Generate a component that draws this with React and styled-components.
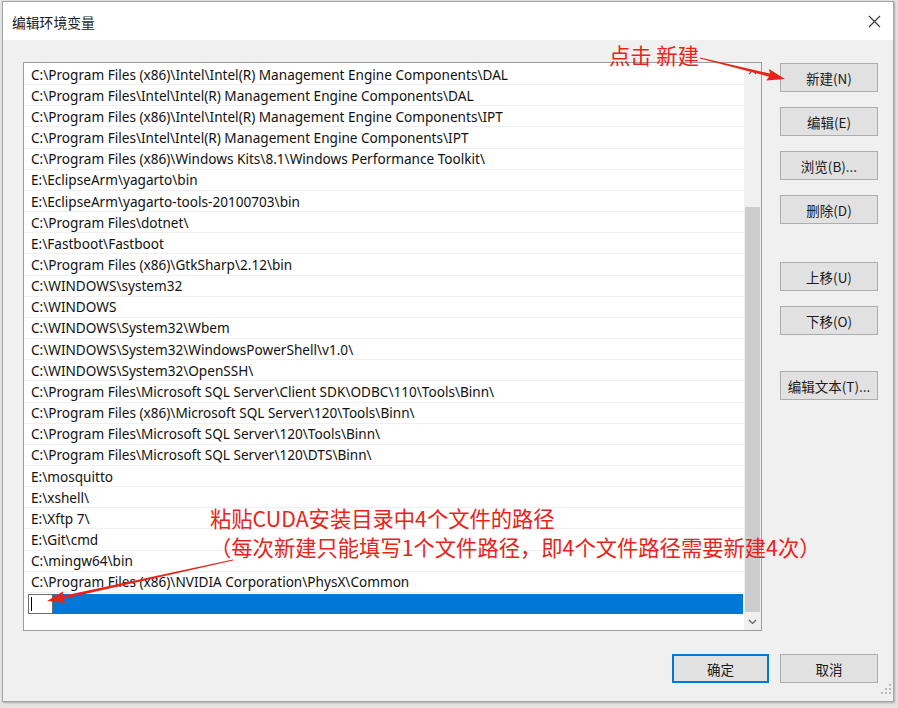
import React from "react";
import styled, { createGlobalStyle } from "styled-components";

const GlobalStyle = createGlobalStyle`
    html, body {
        margin: 0;
        padding: 0;
        background: #e4e4e4;
    }
    body {
        font-family: "Noto Sans", "Noto Sans CJK SC", sans-serif;
    }
`;

const Page = styled.div`
    position: relative;
    width: 898px;
    height: 708px;
    overflow: hidden;
    padding: 1px 0 0 2px;
    box-sizing: border-box;
`;

const Window = styled.div`
    width: 892px;
    height: 701px;
    box-sizing: border-box;
    border: 1px solid #a4a4a4;
    box-shadow: 1px 1px 2px rgba(0, 0, 0, 0.25);
    background: #f0f0f0;
    display: flex;
    flex-direction: column;
`;

const TitleBar = styled.div`
    height: 38px;
    background: #ffffff;
    display: flex;
    align-items: center;
    justify-content: space-between;
    padding: 0 12px 0 9px;
    flex-shrink: 0;
`;

const Title = styled.div`
    font-family: "Noto Sans CJK SC", sans-serif;
    font-size: 13.8px;
    color: #1a1a1a;
    margin-top: 1px;
`;

const Body = styled.div`
    flex: 1;
    display: flex;
    flex-direction: column;
    padding: 22px 15px 0 20px;
`;

const Main = styled.div`
    display: flex;
    align-items: flex-start;
`;

const ListBox = styled.div`
    width: 739px;
    height: 569px;
    box-sizing: border-box;
    border: 1px solid #9c9c9c;
    background: #ffffff;
    display: flex;
`;

const Rows = styled.div`
    flex: 1;
    padding-top: 1px;
    display: flex;
    flex-direction: column;
`;

const Row = styled.div`
    height: 21.17px;
    box-sizing: border-box;
    border-bottom: 1px solid #f0f0f0;
    padding-left: 7px;
    display: flex;
    align-items: center;
    font-size: 13.6px;
    color: #111;
    white-space: nowrap;
    overflow: hidden;
`;

const SelectedRow = styled.div`
    height: 20px;
    margin: 1px 1px 0 4px;
    background: #0078d7;
    display: flex;
`;

const EditBox = styled.div`
    width: 25px;
    height: 20px;
    box-sizing: border-box;
    background: #ffffff;
    border: 1px solid #6d6d6d;
    display: flex;
    align-items: center;
    padding-left: 2px;
`;

const Caret = styled.div`
    width: 1px;
    height: 14px;
    background: #000;
`;

const ScrollBar = styled.div`
    width: 17px;
    background: #f0f0f0;
    display: flex;
    flex-direction: column;
    align-items: center;
`;

const ScrollArrow = styled.div`
    height: ${p => p.$h}px;
    width: 17px;
    display: flex;
    align-items: center;
    justify-content: center;
`;

const Track = styled.div`
    flex: 1;
    width: 17px;
    display: flex;
    flex-direction: column;
    align-items: center;
`;

const Thumb = styled.div`
    width: 15px;
    height: 405px;
    margin-top: ${p => p.$offset}px;
    background: #cdcdcd;
`;

const Side = styled.div`
    display: flex;
    flex-direction: column;
    margin-left: 18px;
    padding-top: 1px;
`;

const Button = styled.div`
    width: ${p => p.$w || 98}px;
    height: 29px;
    box-sizing: border-box;
    margin-top: ${p => p.$mt || 0}px;
    background: #e1e1e1;
    border: ${p => (p.$focus ? "2px solid #0078d7" : "1px solid #adadad")};
    display: flex;
    align-items: center;
    justify-content: center;
    font-family: "Noto Sans CJK SC", sans-serif;
    font-size: 13.5px;
    color: #1a1a1a;
`;

const Footer = styled.div`
    display: flex;
    justify-content: flex-end;
    gap: 11px;
    margin-top: 23px;
`;

const Grip = styled.div`
    position: absolute;
    right: 6px;
    bottom: 8px;
`;

const Overlay = styled.svg`
    position: absolute;
    left: 0;
    top: 0;
    pointer-events: none;
`;

const Note = styled.div`
    position: absolute;
    left: ${p => p.$x}px;
    top: ${p => p.$y}px;
    font-family: "Noto Sans CJK SC", sans-serif;
    font-size: 21.3px;
    line-height: 28px;
    color: #e8231a;
    white-space: nowrap;
`;

const paths = [
    String.raw`C:\Program Files (x86)\Intel\Intel(R) Management Engine Components\DAL`,
    String.raw`C:\Program Files\Intel\Intel(R) Management Engine Components\DAL`,
    String.raw`C:\Program Files (x86)\Intel\Intel(R) Management Engine Components\IPT`,
    String.raw`C:\Program Files\Intel\Intel(R) Management Engine Components\IPT`,
    String.raw`C:\Program Files (x86)\Windows Kits\8.1\Windows Performance Toolkit\ `.trim(),
    String.raw`E:\EclipseArm\yagarto\bin`,
    String.raw`E:\EclipseArm\yagarto-tools-20100703\bin`,
    String.raw`C:\Program Files\dotnet\ `.trim(),
    String.raw`E:\Fastboot\Fastboot`,
    String.raw`C:\Program Files (x86)\GtkSharp\2.12\bin`,
    String.raw`C:\WINDOWS\system32`,
    String.raw`C:\WINDOWS`,
    String.raw`C:\WINDOWS\System32\Wbem`,
    String.raw`C:\WINDOWS\System32\WindowsPowerShell\v1.0\ `.trim(),
    String.raw`C:\WINDOWS\System32\OpenSSH\ `.trim(),
    String.raw`C:\Program Files\Microsoft SQL Server\Client SDK\ODBC\110\Tools\Binn\ `.trim(),
    String.raw`C:\Program Files (x86)\Microsoft SQL Server\120\Tools\Binn\ `.trim(),
    String.raw`C:\Program Files\Microsoft SQL Server\120\Tools\Binn\ `.trim(),
    String.raw`C:\Program Files\Microsoft SQL Server\120\DTS\Binn\ `.trim(),
    String.raw`E:\mosquitto`,
    String.raw`E:\xshell\ `.trim(),
    String.raw`E:\Xftp 7\ `.trim(),
    String.raw`E:\Git\cmd`,
    String.raw`C:\mingw64\bin`,
    String.raw`C:\Program Files (x86)\NVIDIA Corporation\PhysX\Common`,
];

const sideButtons = [
    { label: "新建(N)", mt: 0 },
    { label: "编辑(E)", mt: 15 },
    { label: "浏览(B)...", mt: 15 },
    { label: "删除(D)", mt: 15 },
    { label: "上移(U)", mt: 38 },
    { label: "下移(O)", mt: 15 },
    { label: "编辑文本(T)...", mt: 36 },
];

// tapered red arrow: thin tail, wider shaft near the head, filled triangle tip
const arrowPoints = (x1, y1, x2, y2) => {
    const dx = x2 - x1;
    const dy = y2 - y1;
    const len = Math.hypot(dx, dy);
    const ux = dx / len;
    const uy = dy / len;
    const nx = -uy;
    const ny = ux;
    const headLen = 16;
    const headW = 6;
    const bx = x2 - ux * headLen;
    const by = y2 - uy * headLen;
    const pts = [
        [x1 + nx * 0.5, y1 + ny * 0.5],
        [bx + nx * 1.6, by + ny * 1.6],
        [bx + nx * headW - ux * 2, by + ny * headW - uy * 2],
        [x2, y2],
        [bx - nx * headW - ux * 2, by - ny * headW - uy * 2],
        [bx - nx * 1.6, by - ny * 1.6],
        [x1 - nx * 0.5, y1 - ny * 0.5],
    ];
    return pts.map(p => p.map(v => v.toFixed(1)).join(",")).join(" ");
};

const Chevron = ({ up }) => (
    <svg width="9" height="6" viewBox="0 0 9 6">
        <path
            d={up ? "M1 5 L4.5 1.5 L8 5" : "M1 1 L4.5 4.5 L8 1"}
            fill="none"
            stroke="#606060"
            strokeWidth="1.2"
        />
    </svg>
);

const GripDots = () => (
    <svg width="12" height="12" viewBox="0 0 12 12">
        {[[10, 2], [10, 6], [6, 6], [10, 10], [6, 10], [2, 10]].map(([x, y], i) => (
            <rect key={i} x={x - 1} y={y - 1} width="2" height="2" fill="#b8b8b8" />
        ))}
    </svg>
);

export default function App() {
    return (
        <>
            <GlobalStyle />
            <Page>
                <Window>
                    <TitleBar>
                        <Title>编辑环境变量</Title>
                        <svg width="13" height="13" viewBox="0 0 13 13">
                            <path d="M1 1 L12 12 M12 1 L1 12" stroke="#333" strokeWidth="1.1" />
                        </svg>
                    </TitleBar>
                    <Body>
                        <Main>
                            <ListBox>
                                <Rows>
                                    {paths.map((p, i) => (
                                        <Row key={i}>{p}</Row>
                                    ))}
                                    <SelectedRow>
                                        <EditBox>
                                            <Caret />
                                        </EditBox>
                                    </SelectedRow>
                                </Rows>
                                <ScrollBar>
                                    <ScrollArrow $h={17}>
                                        <Chevron up />
                                    </ScrollArrow>
                                    <Track>
                                        <Thumb $offset={127} />
                                    </Track>
                                    <ScrollArrow $h={17}>
                                        <Chevron />
                                    </ScrollArrow>
                                </ScrollBar>
                            </ListBox>
                            <Side>
                                {sideButtons.map(b => (
                                    <Button key={b.label} $mt={b.mt}>
                                        {b.label}
                                    </Button>
                                ))}
                            </Side>
                        </Main>
                        <Footer>
                            <Button $w={97} $focus>确定</Button>
                            <Button>取消</Button>
                        </Footer>
                    </Body>
                </Window>
                <Grip>
                    <GripDots />
                </Grip>
                <Note $x={609} $y={41}>点击 新建</Note>
                <Note $x={210} $y={504}>粘贴CUDA安装目录中4个文件的路径</Note>
                <Note $x={210} $y={533}>（每次新建只能填写1个文件路径，即4个文件路径需要新建4次）</Note>
                <Overlay width="898" height="708" viewBox="0 0 898 708">
                    <polygon points={arrowPoints(700, 58, 785, 79)} fill="#e8231a" />
                    <polygon points={arrowPoints(233, 560, 47, 601)} fill="#e8231a" />
                </Overlay>
            </Page>
        </>
    );
}
